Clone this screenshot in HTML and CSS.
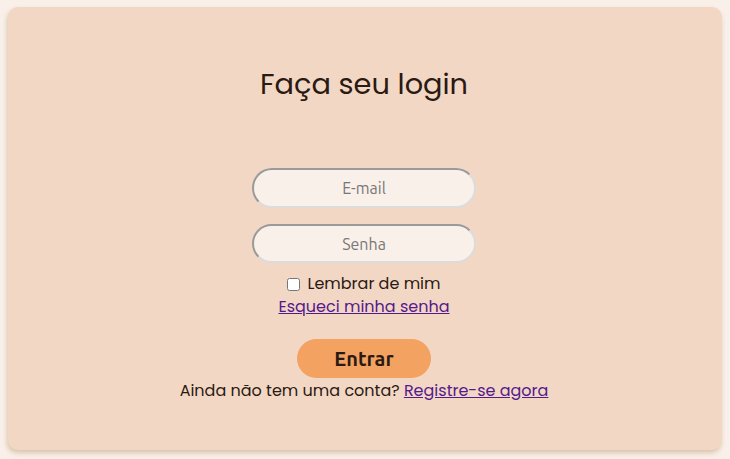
FILE: index.html
```html
<!DOCTYPE html>
<html lang="pt-BR">
<head>
    <meta charset="UTF-8">
    <meta name="viewport" content="width=device-width, initial-scale=1.0">
    <title>Login</title>
    <link rel="stylesheet" href="styles.css">
</head>
<body>
    <div class="login-card">
        <h1>Faça seu login</h1>
        <form class="login-form">
            <input type="email" placeholder="E-mail">
            <input type="password" placeholder="Senha">
            <label class="remember"><input type="checkbox"> Lembrar de mim</label>
            <a href="#" class="forgot">Esqueci minha senha</a>
            <button type="submit">Entrar</button>
        </form>
        <p class="signup">Ainda não tem uma conta? <a href="#">Registre-se agora</a></p>
    </div>
</body>
</html>
```

FILE: styles.css
```css
body {
    margin: 0;
    padding: 7px 8px 9px;
    background-color: #faf0ea;
    font-family: Poppins, "Open Sans", sans-serif;
    color: #2a1a12;
}
.login-card {
    background-color: #f2d7c5;
    border-radius: 10px;
    box-shadow: -1px 3px 5px rgba(190, 160, 120, 0.55);
    height: 443px;
    box-sizing: border-box;
    padding: 57px 2px 0 0;
    text-align: center;
}
h1 {
    margin: 0;
    font-size: 28.8px;
    font-weight: 400;
    line-height: 40px;
}
.login-form {
    display: flex;
    flex-direction: column;
    align-items: center;
    margin-top: 64px;
}
.login-form input[type="email"],
.login-form input[type="password"] {
    width: 224px;
    height: 40px;
    box-sizing: border-box;
    border: 2px solid;
    border-color: #9a9a9a #dcdcdc #dcdcdc #9a9a9a;
    border-radius: 20px;
    background-color: #faf0ea;
    text-align: center;
    font-family: Ubuntu, "Open Sans", sans-serif;
    font-size: 16px;
    margin: 0 0 16px;
}
.login-form input[type="password"] {
    height: 39px;
    margin-bottom: 10px;
}
.login-form input::placeholder {
    color: #777;
}
.remember {
    font-size: 16px;
    line-height: 22px;
    display: flex;
    align-items: center;
    gap: 7px;
}
.remember input {
    margin: 0;
    width: 13px;
    height: 13px;
}
.forgot,
.signup a {
    color: #551a8b;
    font-size: 16px;
}
.forgot {
    line-height: 24px;
}
button {
    margin-top: 20px;
    width: 134px;
    height: 39px;
    border: none;
    border-radius: 20px;
    background-color: #f4a261;
    color: #2a1a12;
    font-family: Ubuntu, "Open Sans", sans-serif;
    font-weight: 700;
    font-size: 20px;
    cursor: pointer;
}
.signup {
    margin: 2px 0 0;
    font-size: 16px;
    line-height: 22px;
}
```
